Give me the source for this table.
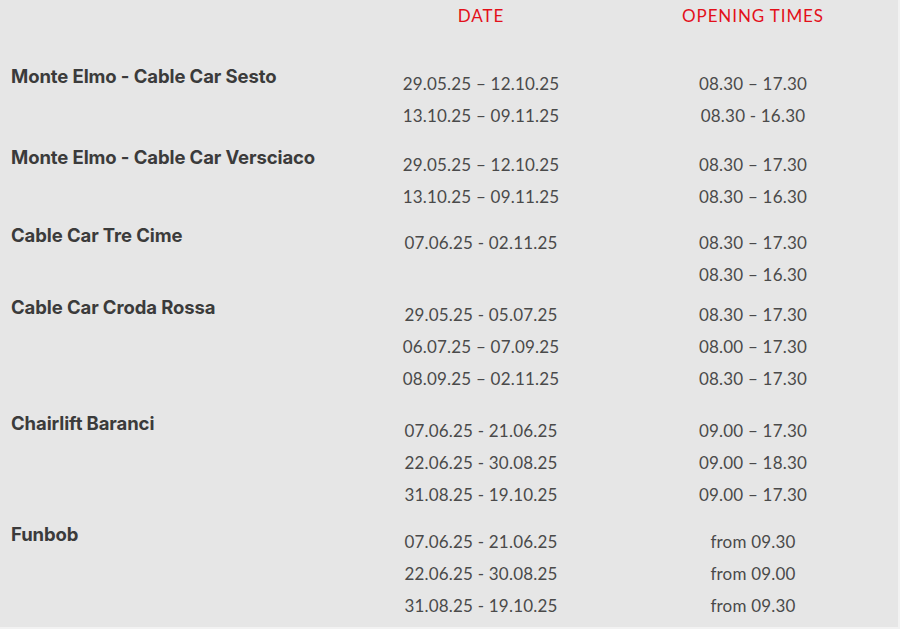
import React from 'react';

type Row = {
  name: string;
  gap: string;
  dates: string[];
  times: string[];
};

const rows: Row[] = [
  {
    name: 'Monte Elmo - Cable Car Sesto',
    gap: 'mt-[33px]',
    dates: ['29.05.25 – 12.10.25', '13.10.25 – 09.11.25'],
    times: ['08.30 – 17.30', '08.30 - 16.30'],
  },
  {
    name: 'Monte Elmo - Cable Car Versciaco',
    gap: 'mt-[14px]',
    dates: ['29.05.25 – 12.10.25', '13.10.25 – 09.11.25'],
    times: ['08.30 – 17.30', '08.30 – 16.30'],
  },
  {
    name: 'Cable Car Tre Cime',
    gap: 'mt-[11px]',
    dates: ['07.06.25 - 02.11.25'],
    times: ['08.30 – 17.30', '08.30 – 16.30'],
  },
  {
    name: 'Cable Car Croda Rossa',
    gap: 'mt-[5px]',
    dates: ['29.05.25 - 05.07.25', '06.07.25 – 07.09.25', '08.09.25 – 02.11.25'],
    times: ['08.30 – 17.30', '08.00 – 17.30', '08.30 – 17.30'],
  },
  {
    name: 'Chairlift Baranci',
    gap: 'mt-[17px]',
    dates: ['07.06.25 - 21.06.25', '22.06.25 - 30.08.25', '31.08.25 - 19.10.25'],
    times: ['09.00 – 17.30', '09.00 – 18.30', '09.00 – 17.30'],
  },
  {
    name: 'Funbob',
    gap: 'mt-[12px]',
    dates: ['07.06.25 - 21.06.25', '22.06.25 - 30.08.25', '31.08.25 - 19.10.25'],
    times: ['from 09.30', 'from 09.00', 'from 09.30'],
  },
];

const cols = 'grid grid-cols-[340px_282px_262px]';

export default function App() {
  return (
    <div className="min-h-screen bg-[#f2f2f2]">
      <div className="w-[898px] h-[627px] bg-[#e6e6e6] font-['Lato',sans-serif] overflow-hidden">
        {/* Header */}
        <div className={`${cols} h-[32px] leading-[32px] text-[17px] tracking-[0.9px] text-[#e3101a] uppercase`}>
          <div />
          <div className="text-center">Date</div>
          <div className="text-center">Opening times</div>
        </div>

        {rows.map((row) => (
          <div key={row.name} className={`${cols} ${row.gap}`}>
            <div className="pl-[11px] h-[24px] leading-[22px] text-[18.5px] font-bold text-[#3b3b3b] font-['Inter',sans-serif] tracking-[-0.1px] whitespace-nowrap">
              {row.name}
            </div>
            <div className="pt-[3px] text-center text-[17px] leading-[32px] text-[#4a4a4a] tracking-[0.2px]">
              {row.dates.map((d, i) => (
                <div key={i}>{d}</div>
              ))}
            </div>
            <div className="pt-[3px] text-center text-[17px] leading-[32px] text-[#4a4a4a] tracking-[0.2px]">
              {row.times.map((t, i) => (
                <div key={i}>{t}</div>
              ))}
            </div>
          </div>
        ))}
      </div>
    </div>
  );
}
